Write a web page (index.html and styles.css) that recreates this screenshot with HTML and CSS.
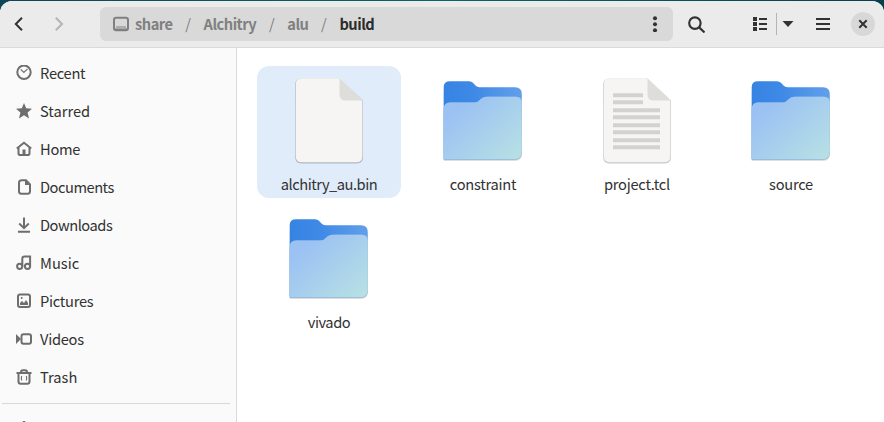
FILE: index.html
```html
<!DOCTYPE html>
<html lang="en">
<head>
<meta charset="utf-8">
<title>build</title>
<link rel="stylesheet" href="styles.css">
</head>
<body>
<svg class="defs" aria-hidden="true">
  <defs>
    <linearGradient id="back" x1="0" y1="0" x2="1" y2="0"><stop offset="0" stop-color="#3783e3"/><stop offset=".4" stop-color="#3f8ae6"/><stop offset="1" stop-color="#629fea"/></linearGradient>
    <linearGradient id="front" x1="0" y1="0.1" x2="1" y2="1"><stop offset="0" stop-color="#99c1f1"/><stop offset=".15" stop-color="#9bc2f3"/><stop offset="1" stop-color="#b9e1e3"/></linearGradient>
    <symbol id="folder" viewBox="0 0 96 96">
      <path d="M8.700 20V89H80Q87 89 87 81V30Z" fill="#000" opacity=".13"/>
      <path d="M8.700 86V15Q8.700 9.300 15 9.300H34Q36.500 9.300 38.200 11L40.500 13.500Q42 15.200 44.500 15.200H80Q86.800 15.200 86.800 22V80Q86.800 87 80 87H8.700Z" fill="url(#back)"/>
      <path d="M8.700 88V38Q8.700 30.600 15 30.600H39.500Q42.500 30.600 44.500 28.300L46.500 26.500Q48.500 24.700 51.500 24.700H81Q86.800 24.700 86.800 31V80.500Q86.800 88 79.500 88Z" fill="#8eb6de"/>
      <path d="M8.700 87.200V38Q8.700 30.600 15 30.600H39.500Q42.500 30.600 44.500 28.300L46.500 26.500Q48.500 24.700 51.500 24.700H81Q86.800 24.700 86.800 31V79.500Q86.800 87.200 79.500 87.200Z" fill="url(#front)"/>
    </symbol>
    <symbol id="file" viewBox="0 0 96 96">
      <path d="M20.500 6.500H58.500L82 28.500V85Q82 91.500 75.500 91.500H20.500Q14.200 91.500 14.200 85V12.500Q14.200 6.500 20.500 6.500Z" fill="#000" opacity=".22"/>
      <path d="M21 6.200H58.500L81.400 28.500V84Q81.400 90.300 75 90.300H21Q14.800 90.300 14.800 84V12.500Q14.800 6.200 21 6.200Z" fill="#f6f5f4"/>
      <path d="M58.500 6.200V22.500Q58.500 28.500 64.500 28.500H81.400Z" fill="#deddda"/>
    </symbol>
    <symbol id="text-file" viewBox="0 0 96 96">
      <use href="#file"/>
      <path d="M24 23.200H54M24 30.300H54M24 38.300H71M24 45.300H71M24 53.300H71M24 60.300H71M24 68.300H71M24 75.300H71" stroke="#d3d2cf" stroke-width="4"/>
    </symbol>
  </defs>
</svg>
<div class="window">
  <header class="bar">
    <svg class="back" viewBox="0 0 16 16"><path d="M11 1.800 4.800 8l6.200 6.200"/></svg>
    <svg class="forward" viewBox="0 0 16 16"><path d="M4.800 1.800 11 8l-6.200 6.200"/></svg>
    <nav class="path">
      <svg class="drive" viewBox="0 0 16 16"><rect x="1" y="1.700" width="14" height="12.600" rx="2.200"/><path d="M3 11h10" stroke-width="1"/><path d="M1.500 13.500h13"/></svg>
      <span class="crumb">share</span><i>/</i><span class="crumb">Alchitry</span><i>/</i><span class="crumb">alu</span><i>/</i><span class="crumb current">build</span>
      <svg class="dots" viewBox="0 0 16 16"><circle cx="8" cy="2.200" r="2"/><circle cx="8" cy="8.200" r="2"/><circle cx="8" cy="14.200" r="2"/></svg>
    </nav>
    <svg class="search" viewBox="0 0 16 16"><circle cx="6.500" cy="6.700" r="5.400"/><path d="m10.500 10.700 5 4.800"/></svg>
    <svg class="list" viewBox="0 0 16 16"><path d="M7 3h8M7 8h8M7 13h8"/><path d="M1 3h4M1 8h4M1 13h4" stroke-width="4"/></svg>
    <span class="split"></span>
    <svg class="caret" viewBox="0 0 12 8"><path d="M.5 1h11L6 7z"/></svg>
    <svg class="menu" viewBox="0 0 16 16"><path d="M1 3h14M1 8h14M1 13h14"/></svg>
    <span class="close"><svg viewBox="0 0 16 16"><path d="m4.300 4.300 7.400 7.400m0-7.400-7.400 7.400"/></svg></span>
  </header>
  <div class="content">
    <aside class="sidebar">
      <ul>
        <li><svg viewBox="0 0 16 16"><circle cx="8" cy="7.200" r="6.700"/><path d="m4.700 4.300 3.200 3.200 3.600-3.700" stroke-width="1.200"/></svg><span class="snug">Recent</span></li>
        <li><svg class="solid" viewBox="0 0 16 16"><path d="m8 0 2.200 5.300 5.800.4-4.400 3.800L13 15.500 8 12.300 3 15.500l1.400-6L0 5.700l5.800-.4z"/></svg><span>Starred</span></li>
        <li><svg viewBox="0 0 16 16"><path d="M.8 7.500 8 1.800l7.200 5.700M2.500 6.500v5.700Q2.500 14 4.200 14h7.600q1.700 0 1.700-1.800V6.500"/><path d="M8 8.500V14" stroke-width="3"/></svg><span class="snug">Home</span></li>
        <li><svg viewBox="0 0 16 16"><path d="M5 1.300h5l4 4v6.900q0 2.500-2.500 2.500H5.500q-2.500 0-2.500-2.500V3.800q0-2.500 2.500-2.500Z"/><path class="fill" d="M9 1v5h5z"/></svg><span class="tight">Documents</span></li>
        <li><svg viewBox="0 0 16 16"><path d="M8 .5V11M3.200 6.500 8 11.200l4.800-4.700M2 14.800h12"/></svg><span class="tight">Downloads</span></li>
        <li><svg viewBox="0 0 16 16"><circle cx="3.700" cy="11.300" r="2.600"/><circle cx="11.500" cy="11.300" r="2.600"/><path d="M6.300 11.500V3.800Q6.300 1.500 8.600 1.500h5.500v10"/></svg><span>Music</span></li>
        <li><svg viewBox="0 0 16 16"><rect x="2" y="1.500" width="12" height="12.500" rx="2"/><path class="fill" d="M4 12V10l2-2 2 2 2-3 2 3v2z"/><circle class="fill" cx="5.700" cy="5" r="1"/></svg><span class="snug">Pictures</span></li>
        <li><svg viewBox="0 0 16 16"><rect x="5.500" y="3.300" width="9.500" height="9.400" rx="2"/><path class="fill" d="M0 3v10l5-5z"/></svg><span class="snug">Videos</span></li>
        <li><svg viewBox="0 0 16 16"><path d="M.5 4h15M2.500 4v8.500q0 2.300 2.300 2.300h6.400q2.300 0 2.300-2.300V4M5 3.500V3q0-1.800 1.800-1.800h2.400Q11 1.200 11 3v.5"/><path d="M5.700 7q-.8 2 0 4.500M10.300 7q.8 2 0 4.500" stroke-width="1.100"/></svg><span>Trash</span></li>
      </ul>
      <hr>
      <ul class="mounts"><li><svg class="solid" viewBox="0 0 16 16"><path d="M7 0h2l1.500 3h-5zM7 2h2v12H7z"/></svg></li></ul>
    </aside>
    <main class="grid">
      <figure class="item selected"><svg><use href="#file"/></svg><figcaption class="tight">alchitry_au.bin</figcaption></figure>
      <figure class="item"><svg><use href="#folder"/></svg><figcaption class="snug">constraint</figcaption></figure>
      <figure class="item"><svg><use href="#text-file"/></svg><figcaption class="snug">project.tcl</figcaption></figure>
      <figure class="item"><svg><use href="#folder"/></svg><figcaption class="snug">source</figcaption></figure>
      <figure class="item"><svg><use href="#folder"/></svg><figcaption class="tight">vivado</figcaption></figure>
    </main>
  </div>
</div>
</body>
</html>
```
FILE: styles.css
```css
* { box-sizing: border-box; }
body {
  margin: 0;
  padding-top: 1px;
  height: 422px;
  overflow: hidden;
  background: linear-gradient(90deg, #0b4755, #086465 50%, #06404f);
  color: #323232;
  font: 14.67px/20px "Noto Sans CJK SC", "Noto Sans", sans-serif;
}
svg { display: block; flex: none; width: 16px; height: 16px; fill: none; stroke: currentColor; stroke-width: 2; }
.defs { position: absolute; width: 0; height: 0; }
.window { height: 421px; border-radius: 12px 12px 0 0; overflow: hidden; background: #fff; }
.snug { letter-spacing: -.27px; }
.tight { letter-spacing: -.48px; }

.bar { display: flex; align-items: center; height: 47px; padding: 0 9px 0 11px; background: #ebebeb; border-bottom: 1px solid #dadada; }
.forward { margin-left: 24px; color: #b5b5b5; }
.path { display: flex; align-items: center; width: 573px; height: 34px; margin-left: 33px; padding: 0 10px 0 13px; border-radius: 6px; background: #d9d9d9; color: #808080; font-weight: 700; }
.drive { margin-right: 6px; }
.crumb { letter-spacing: -.5px; }
.path i { width: 31px; text-align: center; font-style: normal; font-weight: 400; }
.current { color: #2b2b2b; }
.dots { margin-left: auto; fill: #323232; stroke: none; }
.search { width: 17px; height: 17px; margin-left: 15px; }
.list { margin-left: 47px; }
.split { width: 1px; height: 22px; margin-left: 8px; background: #b5b5b5; }
.caret { width: 12px; height: 8px; margin-left: 5px; fill: currentColor; stroke: none; }
.menu { margin-left: 21px; }
.close { display: grid; place-items: center; width: 24px; height: 24px; margin-left: auto; border-radius: 50%; background: #d8d8d8; }

.content { display: flex; height: 374px; }
.sidebar { width: 237px; background: #fafafa; border-right: 1px solid #dadada; padding-top: 6px; }
.sidebar ul { list-style: none; margin: 0; padding: 0; }
.sidebar li { display: flex; align-items: center; gap: 8px; height: 38px; padding-left: 16px; }
.sidebar svg { color: #6e6e6e; }
.solid, .fill { fill: currentColor; stroke: none; }
hr { height: 1px; margin: 7px 6px 0 2px; border: 0; background: #d8d8d8; }
.sidebar .mounts { padding-top: 6px; }

.grid { display: grid; grid-template-columns: repeat(4, 144px); grid-auto-rows: 132px; gap: 6px 10px; padding: 18px 0 0 20px; }
.item { display: flex; flex-direction: column; align-items: center; margin: 0; padding-top: 6px; border-radius: 12px; }
.item svg { width: 96px; height: 96px; stroke: none; }
.item figcaption { margin-top: 6px; white-space: nowrap; }
.selected { background: #e1ecfb; }
```
